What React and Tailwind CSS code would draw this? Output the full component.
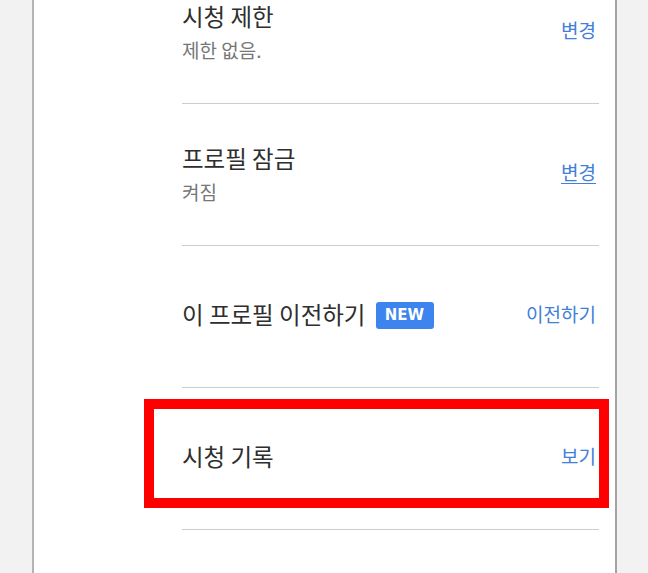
import React from "react";

const rows = [
  { title: "시청 제한", sub: "제한 없음.", action: "변경" },
  { title: "프로필 잠금", sub: "켜짐", action: "변경", underline: true },
  { title: "이 프로필 이전하기", badge: "NEW", action: "이전하기" },
  { title: "시청 기록", action: "보기", highlight: true },
];

function SettingRow({ row }) {
  return (
    <div
      className={
        "relative flex h-[142px] items-center justify-between border-b border-[#cdcdcd] " +
        (row.sub ? "pb-[1px]" : "pb-[5px]")
      }
    >
      <div className="flex flex-col">
        <div className="flex items-center">
          <span className="text-[23.5px] leading-[28px] text-[#2e2e2e]">{row.title}</span>
          {row.badge && (
            <span className="ml-[10px] mt-[3px] flex h-[27px] w-[58px] items-center justify-center rounded-[3px] bg-[#3d84ee] font-['DejaVu_Sans',sans-serif] text-[15px] font-bold text-white">
              {row.badge}
            </span>
          )}
        </div>
        {row.sub && (
          <span className="mt-[8px] text-[19px] leading-[24px] text-[#777777]">{row.sub}</span>
        )}
      </div>
      <a
        href="#"
        className={
          "mr-[3px] text-[19px] leading-[24px] text-[#3f80d8] " +
          (row.sub ? "mb-[4px] " : "") +
          (row.underline ? "underline underline-offset-[3px]" : "no-underline")
        }
      >
        {row.action}
      </a>
      {row.highlight && (
        <div className="pointer-events-none absolute left-[-38px] right-[-10px] top-[11px] bottom-[21px] border-[10px] border-[#ff0000]" />
      )}
    </div>
  );
}

export default function App() {
  return (
    <div className="flex h-[573px] w-[648px] overflow-hidden bg-[#f2f2f2] font-['Noto_Sans_CJK_KR',sans-serif]">
      <div className="w-[32px] shrink-0" />
      <div className="w-[585px] shrink-0 overflow-hidden border-x-2 border-l-[#b4b4b4] border-r-[#a3a3a3] bg-white">
        <div className="mt-[-38px] pl-[148px] pr-[16px]">
          {rows.map((row) => (
            <SettingRow key={row.title} row={row} />
          ))}
        </div>
      </div>
    </div>
  );
}
